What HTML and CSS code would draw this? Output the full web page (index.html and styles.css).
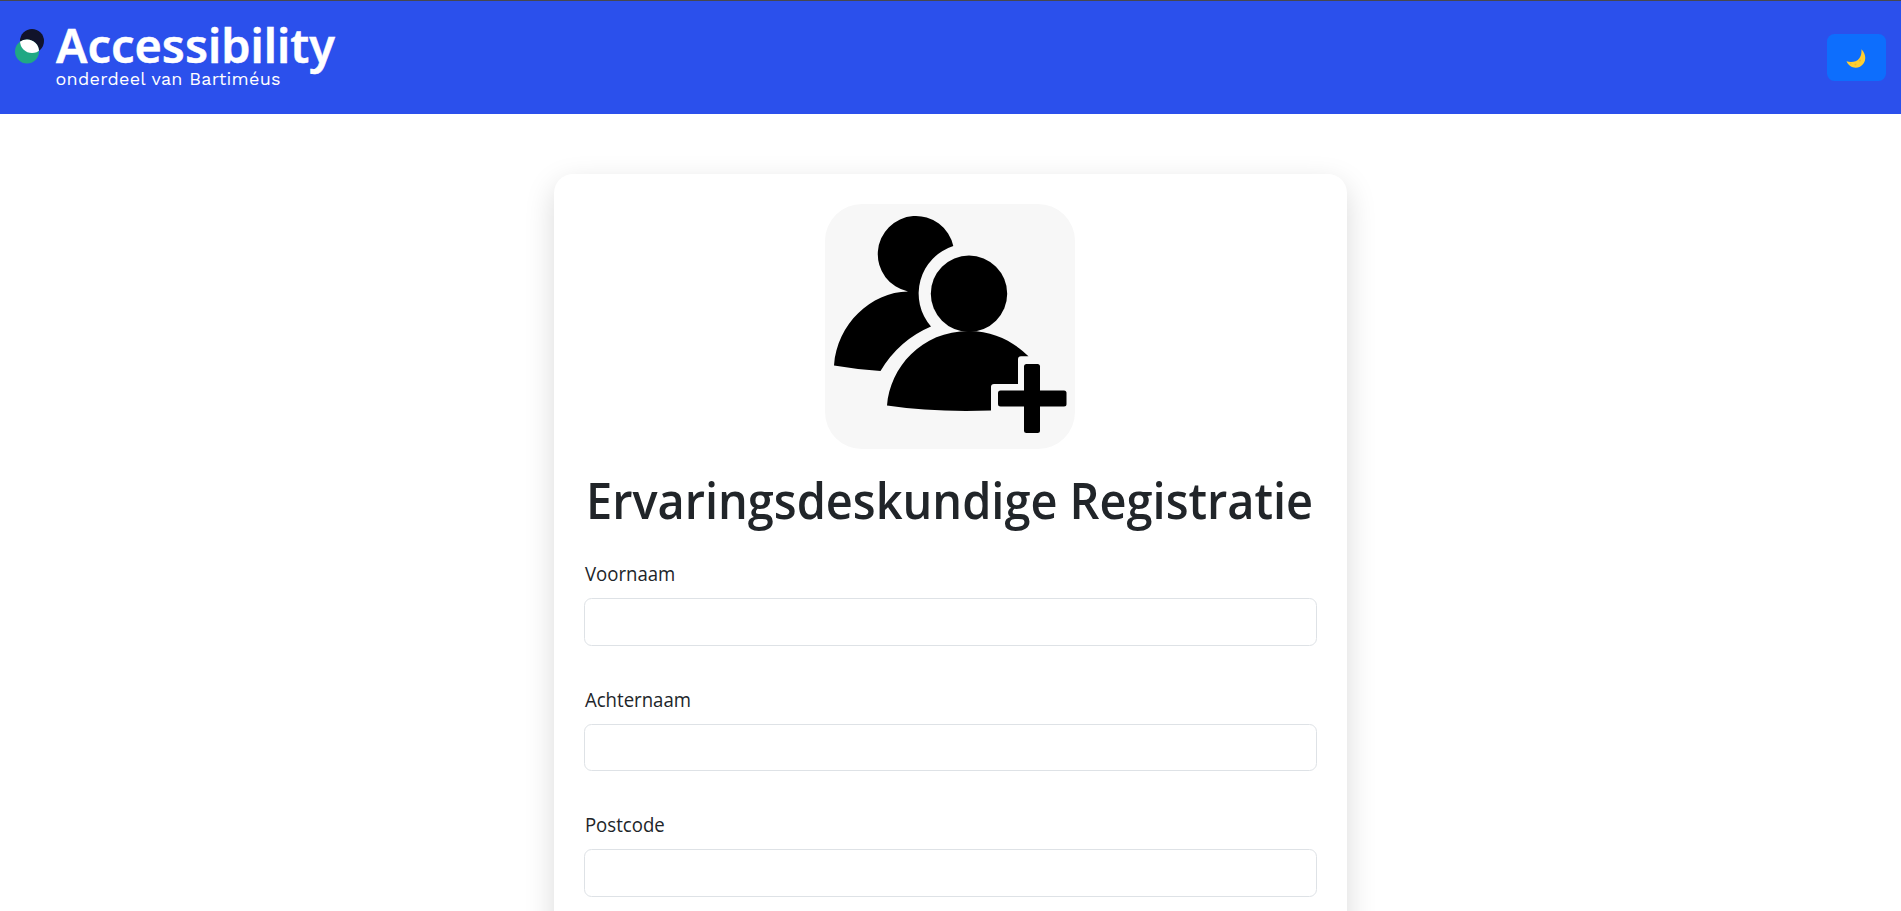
FILE: index.html
```html
<!DOCTYPE html>
<html lang="nl">
<head>
<meta charset="utf-8">
<title>Ervaringsdeskundige Registratie</title>
<link rel="stylesheet" href="styles.css">
</head>
<body>
<header class="navbar">
  <svg class="logo" width="340" height="92" viewBox="0 0 340 92">
    <defs><clipPath id="overlap"><circle cx="32" cy="41" r="12"/></clipPath></defs>
    <circle cx="32" cy="41" r="12" fill="#11132b"/>
    <circle cx="27" cy="51.5" r="12" fill="#20a884"/>
    <circle cx="27" cy="51.5" r="12" fill="#fff" clip-path="url(#overlap)"/>
    <text class="logo-name" x="56" y="63" textLength="279" lengthAdjust="spacingAndGlyphs">Accessibility</text>
    <text class="logo-sub" x="55.5" y="85" textLength="225">onderdeel van Bartiméus</text>
  </svg>
  <button class="theme-toggle" type="button" aria-label="Thema">
    <svg width="20" height="19" viewBox="0 0 20 19">
      <path d="M15.4 .3C21.4 6.4 20 14.800 14 17.700C8.800 20 2.800 18 .5 12.300C5.600 13.800 10.500 12.700 13 9.700C15.100 7.200 15.700 4 15.400 .3Z" fill="#ffce31"/>
      <circle cx="14" cy="11.500" r="1.100" fill="#f2b92b"/>
      <circle cx="9.500" cy="15.500" r="1" fill="#f2b92b"/>
      <circle cx="4.800" cy="14.500" r=".7" fill="#f2b92b"/>
    </svg>
  </button>
</header>
<main class="page">
  <section class="card">
    <svg class="picture" width="250" height="245" viewBox="0 0 250 245">
      <rect width="250" height="245" rx="37" fill="#f7f7f7"/>
      <path d="M83 87.500A38.200 38.200 0 1 1 128.300 42A50 50 0 0 0 106 122.500Q74 136 55.500 167Q32 165.500 9 161.500C12 120 46 88 83 87.500Z"/>
      <circle cx="144" cy="89.700" r="38.200"/>
      <path d="M62 201.500C65 164 96 127 144 127C170 127 190 139 203.500 152.300H196Q193 152.300 193 155.300V180H169Q166 180 166 183V206.500Q108 208.500 62 201.500Z"/>
      <rect x="199" y="160" width="16" height="69" rx="2.500"/>
      <rect x="173" y="186.500" width="68.500" height="16" rx="2.500"/>
    </svg>
    <h1 class="title">Ervaringsdeskundige Registratie</h1>
    <form class="form">
      <div class="field">
        <label class="label" for="voornaam">Voornaam</label>
        <input class="input" id="voornaam" type="text">
      </div>
      <div class="field">
        <label class="label" for="achternaam">Achternaam</label>
        <input class="input" id="achternaam" type="text">
      </div>
      <div class="field">
        <label class="label" for="postcode">Postcode</label>
        <input class="input" id="postcode" type="text">
      </div>
    </form>
  </section>
</main>
</body>
</html>
```
FILE: styles.css
```css
* { box-sizing: border-box; }
body {
  margin: 0;
  height: 911px;
  overflow: hidden;
  background: #fff;
  color: #212529;
  font-family: "Segoe UI", "Open Sans", "Noto Sans", sans-serif;
}
.navbar {
  display: flex;
  justify-content: space-between;
  align-items: center;
  height: 114px;
  padding-right: 15px;
  border-top: 1px solid #46474f;
  background: #2b50ec;
}
.logo { align-self: flex-start; margin-top: -1px; }
.logo-name { font: 600 46px "Noto Sans", sans-serif; fill: #fff; stroke: #fff; stroke-width: .5px; }
.logo-sub { font: 400 18px "Work Sans", "Noto Sans", sans-serif; fill: #fff; }
.theme-toggle {
  display: flex;
  align-items: center;
  justify-content: center;
  width: 59px;
  height: 47px;
  padding: 2px 1px 0 0;
  border: 0;
  border-radius: 7.5px;
  background: #0d6efd;
}
.page {
  display: flex;
  justify-content: center;
  height: 797px;
  padding: 60px 1px 0 0;
  overflow: hidden;
}
.card {
  display: flex;
  flex-direction: column;
  align-items: center;
  width: 793px;
  height: 1100px;
  padding: 30px;
  border-radius: 19px;
  background: #fff;
  box-shadow: 0 10px 30px rgba(0, 0, 0, .15);
}
.picture { flex: none; }
.title {
  margin: 21px 0 0;
  font-size: 50px;
  font-weight: 600;
  line-height: 60px;
  white-space: nowrap;
  transform: scaleX(.938);
}
.form { width: 100%; margin-top: 29px; display: flex; flex-direction: column; gap: 39px; }
.field { display: flex; flex-direction: column; align-items: flex-start; gap: 9px; }
.label {
  font-size: 20px;
  line-height: 30px;
  padding-left: 1px;
  transform: scaleX(.93);
  transform-origin: 0 50%;
}
.input {
  width: 100%;
  height: 47.5px;
  padding: 8px 15px;
  border: 1px solid #dee2e6;
  border-radius: 7.5px;
  background: #fff;
  font: inherit;
}
```
